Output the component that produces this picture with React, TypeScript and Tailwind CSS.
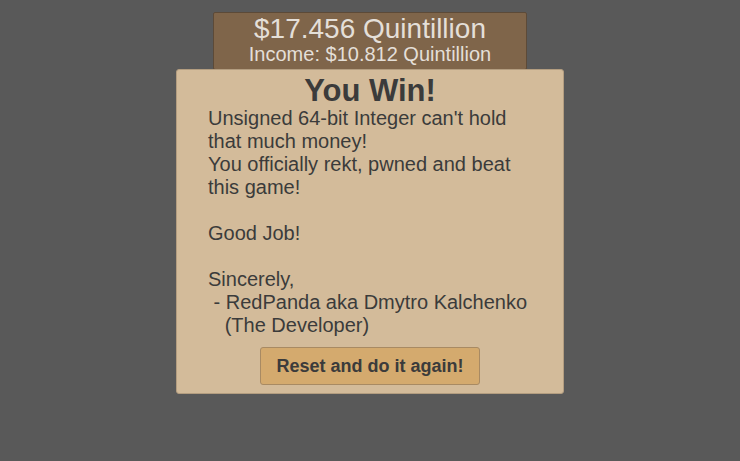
export default function App() {
  const lines = [
    "Unsigned 64-bit Integer can't hold",
    "that much money!",
    "You officially rekt, pwned and beat",
    "this game!",
    "",
    "Good Job!",
    "",
    "Sincerely,",
    " - RedPanda aka Dmytro Kalchenko",
    "   (The Developer)",
  ];

  return (
    <div
      className="w-[740px] h-[461px] bg-[#595959] flex flex-col items-center pt-[12px]"
      style={{ fontFamily: '"Liberation Sans", Arial, sans-serif' }}
    >
      {/* Money header */}
      <div className="w-[314px] h-[58px] bg-[#7f654a] border border-[#5c4a38] rounded-[2px] flex flex-col items-center pt-[1px] text-[#e4dfd8]">
        <p className="text-[28px] leading-[30px]">$17.456 Quintillion</p>
        <p className="text-[20px] leading-[21px]">Income: $10.812 Quintillion</p>
      </div>

      {/* Win panel */}
      <div className="w-[388px] -mt-[1px] bg-[#d3bb9a] border border-[#b39d80] rounded-[3px] flex flex-col items-center pt-[5px] pb-[8px] text-[#3b3b3b]">
        <h1 className="text-[31px] font-bold leading-[32px]">You Win!</h1>
        <div className="w-full pl-[31px] text-[20px] leading-[23px] whitespace-pre">
          {lines.map((line, i) => (
            <p key={i} className="h-[23px]">{line}</p>
          ))}
        </div>
        <button className="mt-[10px] w-[220px] h-[38px] bg-[#d4aa6e] border border-[#a88a63] rounded-[3px] text-[18px] font-bold text-[#3b3b3b]">
          Reset and do it again!
        </button>
      </div>
    </div>
  );
}
